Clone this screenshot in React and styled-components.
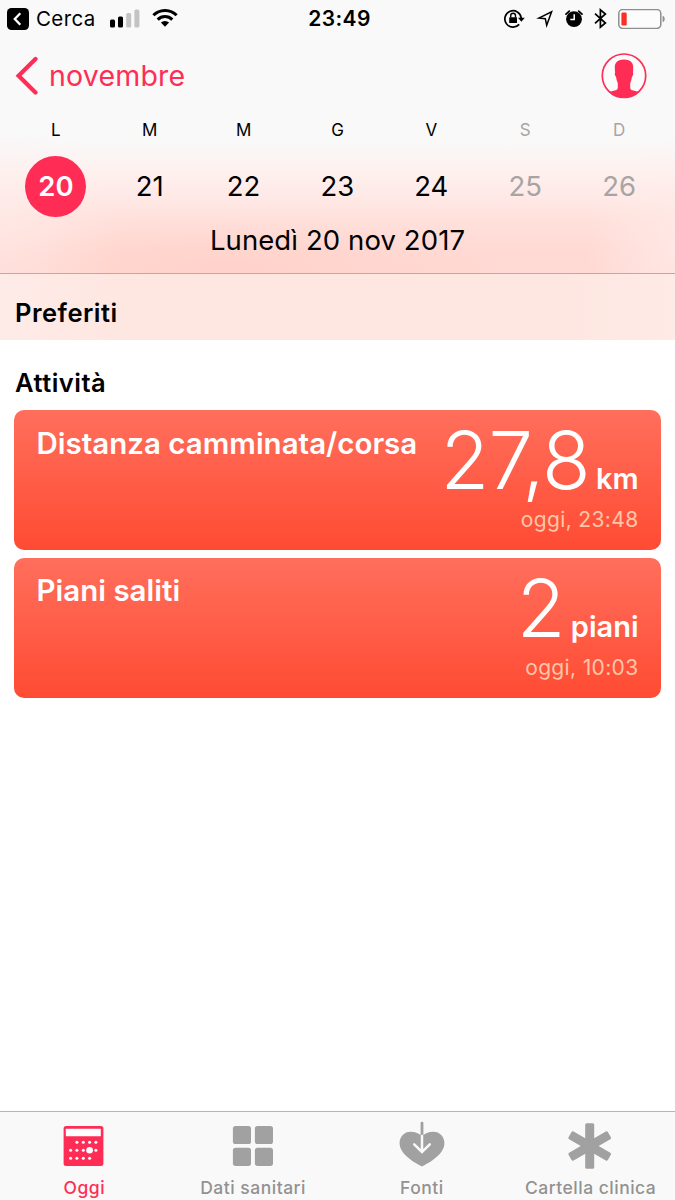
import styled, { createGlobalStyle } from "styled-components";

const colors = {
  pink: "#ff2d55",
  bar: "#f9f9f9",
  gray: "#929292",
  iconGray: "#a1a1a1",
  weekend: "#a9a4a4",
};

const days = [
  { letter: "L", number: "20", selected: true },
  { letter: "M", number: "21" },
  { letter: "M", number: "22" },
  { letter: "G", number: "23" },
  { letter: "V", number: "24" },
  { letter: "S", number: "25", weekend: true },
  { letter: "D", number: "26", weekend: true },
];

const activities = [
  { name: "Distanza camminata/corsa", value: "27,8", unit: "km", time: "oggi, 23:48" },
  { name: "Piani saliti", value: "2", unit: "piani", time: "oggi, 10:03" },
];

const tabs = [
  { label: "Oggi", Icon: TodayIcon, active: true },
  { label: "Dati sanitari", Icon: GridIcon },
  { label: "Fonti", Icon: SourcesIcon },
  { label: "Cartella clinica", Icon: RecordIcon },
];

const App = () => {
  return (
    <Screen>
      <GlobalStyle />
      <Header>
        <StatusBar />
        <NavBar>
          <BackButton>
            <ChevronIcon />
            <BackText>novembre</BackText>
          </BackButton>
          <ProfileIcon />
        </NavBar>
        <Week>
          {days.map((day) => (
            <Day key={day.number} $weekend={day.weekend}>
              <DayLetter>{day.letter}</DayLetter>
              <DayNumber $selected={day.selected}>{day.number}</DayNumber>
            </Day>
          ))}
        </Week>
        <FullDate>Lunedì 20 nov 2017</FullDate>
      </Header>
      <Favorites>
        <SectionTitle>Preferiti</SectionTitle>
      </Favorites>
      <Content>
        <SectionTitle>Attività</SectionTitle>
        <CardList>
          {activities.map((item) => (
            <Card key={item.name}>
              <CardName>{item.name}</CardName>
              <CardData>
                <Amount>
                  <Value>{item.value}</Value>
                  <Unit>{item.unit}</Unit>
                </Amount>
                <Time>{item.time}</Time>
              </CardData>
            </Card>
          ))}
        </CardList>
      </Content>
      <TabBar>
        {tabs.map(({ label, Icon, active }) => (
          <Tab key={label} $active={active}>
            <Icon />
            <TabLabel $active={active}>{label}</TabLabel>
          </Tab>
        ))}
      </TabBar>
    </Screen>
  );
};

export default App;

function StatusBar() {
  return (
    <Status>
      <StatusLeft>
        <svg width="22" height="22" viewBox="0 0 22 22">
          <rect width="22" height="22" rx="4.5" fill="#000" />
          <path d="M13.3 5.3 7.8 11l5.5 5.7" fill="none" stroke="#fff" strokeWidth="2.3" />
        </svg>
        <Carrier>Cerca</Carrier>
        <SignalIcon />
        <WifiIcon />
      </StatusLeft>
      <Clock>23:49</Clock>
      <StatusRight>
        <LockIcon />
        <LocationIcon />
        <AlarmIcon />
        <BluetoothIcon />
        <BatteryIcon />
      </StatusRight>
    </Status>
  );
}

function SignalIcon() {
  return (
    <svg width="30" height="20" viewBox="0 0 30 20">
      <rect x="0" y="10.5" width="5" height="8" rx="1.5" />
      <rect x="8" y="7.5" width="5" height="11" rx="1.5" />
      <rect x="16.2" y="4" width="5" height="14.5" rx="1.5" fill="#c3c3c3" />
      <rect x="24.4" y="0.5" width="5" height="18" rx="1.5" fill="#c3c3c3" />
    </svg>
  );
}

function WifiIcon() {
  return (
    <svg width="26" height="20" viewBox="0 0 26 20">
      <g fill="none" stroke="#000" strokeWidth="3">
        <path d="M1.4 6.3a16.4 16.4 0 0 1 23.2 0" />
        <path d="M5.7 10.6a10.3 10.3 0 0 1 14.6 0" />
      </g>
      <path d="M13 17.7 8.9 13.6a5.8 5.8 0 0 1 8.2 0Z" />
    </svg>
  );
}

function LockIcon() {
  return (
    <svg width="21" height="20" viewBox="0 0 21 20">
      <path d="M15.2 15.4a8.2 8.2 0 1 1 2-6.4" fill="none" stroke="#000" strokeWidth="1.7" />
      <path d="M14 8.7h6.8l-3.4 4Z" />
      <rect x="5.2" y="8.2" width="7.8" height="5.9" rx="0.6" />
      <path d="M6.7 8.5V6.7a2.4 2.4 0 0 1 4.8 0v1.8" fill="none" stroke="#000" strokeWidth="1.4" />
    </svg>
  );
}

function LocationIcon() {
  return (
    <svg width="18" height="20" viewBox="0 0 18 20">
      <path d="M2.8 9.1 15.6 2.800 10.7 16.2 9.3 9.7Z" fill="none" stroke="#000" strokeWidth="1.5" />
    </svg>
  );
}

function AlarmIcon() {
  return (
    <svg width="18" height="18" viewBox="0 0 18 18">
      <circle cx="9" cy="9.2" r="7.9" />
      <path d="M1 4.1 4.3 1.1M17 4.1l-3.3-3" stroke="#000" strokeWidth="1.8" strokeLinecap="round" />
      <path d="M9.2 4.3v5.3H5.3" fill="none" stroke="#fff" strokeWidth="1.5" />
    </svg>
  );
}

function BluetoothIcon() {
  return (
    <svg width="13" height="21" viewBox="0 0 13 21">
      <path
        d="M1 5.7 11.4 15 6.4 19.2V1.8l5 4.2L1 15.3"
        fill="none"
        stroke="#000"
        strokeWidth="1.7"
      />
    </svg>
  );
}

function BatteryIcon() {
  return (
    <svg width="48" height="20" viewBox="0 0 48 20">
      <rect x="0.8" y="0.6" width="42" height="18.8" rx="3.8" fill="#fcfcfc" stroke="#8e8e8e" strokeWidth="1.5" />
      <path d="M44.6 6.8c2.8.7 2.8 5.7 0 6.4Z" fill="#8e8e8e" />
      <rect x="3.4" y="3.4" width="5.3" height="13.2" rx="1.3" fill="#fb2f27" />
    </svg>
  );
}

function ChevronIcon() {
  return (
    <svg width="24" height="40" viewBox="0 0 24 40">
      <path
        d="M21.5 3 4.6 19.7l16.9 16.8"
        fill="none"
        stroke={colors.pink}
        strokeWidth="4.2"
        strokeLinecap="round"
      />
    </svg>
  );
}

function ProfileIcon() {
  return (
    <svg width="46" height="46" viewBox="0 0 46 46">
      <circle cx="23" cy="22.7" r="21.7" fill="#fbfbfb" stroke={colors.pink} strokeWidth="1.7" />
      <path
        d="M23 6.4c6 0 9.3 2.9 9.2 7.6 0 2-.1 3.8-.3 5.3.7 1.2.2 3.9-1 4.8-.3 2.5-.8 4.4-1.7 6v4.3c0 1.6.6 2.3 2.3 2.9 2.4.8 4.8 1.1 6.5 1.8C34 42.7 28.8 44.6 23 44.6S12 42.7 8 39.1c1.7-.7 4.1-1 6.5-1.8 1.7-.6 2.3-1.3 2.3-2.9v-4.3c-.9-1.6-1.4-3.5-1.7-6-1.2-.9-1.7-3.6-1-4.8-.2-1.5-.3-3.3-.3-5.3C13.7 9.3 17 6.4 23 6.4Z"
        fill={colors.pink}
      />
    </svg>
  );
}

function TodayIcon() {
  const dots = [
    [16.9, 21.3], [23.3, 21.3], [29.6, 21.3], [35.9, 21.3],
    [10.6, 29.3], [16.9, 29.3], [23.3, 29.3], [35.9, 29.3],
    [10.6, 37.3], [16.9, 37.3], [23.3, 37.3], [29.6, 37.3],
  ];
  return (
    <svg width="48" height="48" viewBox="0 0 48 48">
      <rect x="3.6" y="5" width="39.8" height="40" rx="2.5" fill="currentColor" />
      <rect x="5.8" y="7.7" width="35" height="7.6" rx="0.6" fill="#fff" />
      {dots.map(([x, y]) => (
        <circle key={`${x}-${y}`} cx={x} cy={y} r="1.5" fill="#fff" />
      ))}
      <circle cx="29.6" cy="29.3" r="3.3" fill="#fff" />
    </svg>
  );
}

function GridIcon() {
  return (
    <svg width="48" height="48" viewBox="0 0 48 48" fill="currentColor">
      <rect x="3.9" y="5" width="18.1" height="18.1" rx="2.6" />
      <rect x="25.9" y="5" width="18.1" height="18.1" rx="2.6" />
      <rect x="3.9" y="26.8" width="18.1" height="18.1" rx="2.6" />
      <rect x="25.9" y="26.8" width="18.1" height="18.1" rx="2.6" />
    </svg>
  );
}

function SourcesIcon() {
  return (
    <svg width="48" height="48" viewBox="0 0 48 48">
      <path
        d="M24 45.5C17.5 42 1.6 33.6 1.6 22.2 1.6 15.6 6.3 10.7 12.6 10.7c4.8 0 9 1.9 11.4 4.4 2.4-2.5 6.6-4.4 11.4-4.4 6.3 0 11 4.9 11 11.5C46.4 33.6 30.5 42 24 45.5Z"
        fill="currentColor"
      />
      <path d="M24 2.2V14" stroke="currentColor" strokeWidth="2.8" strokeLinecap="round" />
      <path d="M24 15V30M16.2 23.3 24 30.9l7.8-7.6" fill="none" stroke={colors.bar} strokeWidth="2.5" strokeLinecap="round" />
    </svg>
  );
}

function RecordIcon() {
  return (
    <svg width="48" height="48" viewBox="0 0 48 48" fill="currentColor">
      {[0, 60, 120].map((angle) => (
        <rect
          key={angle}
          x="18.2"
          y="2.3"
          width="9"
          height="45.4"
          rx="1.5"
          transform={`rotate(${angle} 22.7 25)`}
        />
      ))}
    </svg>
  );
}

const GlobalStyle = createGlobalStyle`
  * {
    box-sizing: border-box;
  }

  body {
    margin: 0;
    background-color: #fff;
    color: #000;
    font-family: Inter, "Liberation Sans", sans-serif;
  }

  svg {
    display: block;
    flex-shrink: 0;
  }
`;

const Screen = styled.div`
  display: flex;
  flex-direction: column;
  width: 675px;
  height: 1200px;
  overflow: hidden;
`;

const Header = styled.header`
  height: 274px;
  border-bottom: 1px solid #bfa9a7;
  background:
    radial-gradient(ellipse 120px 110px at 0 225px, rgba(255, 240, 238, 0.5), rgba(255, 240, 238, 0)),
    radial-gradient(ellipse 90px 110px at 675px 250px, rgba(255, 240, 238, 0.6), rgba(255, 240, 238, 0)),
    radial-gradient(ellipse 260px 50px at 230px 268px, rgba(255, 204, 194, 0.5), rgba(255, 204, 194, 0)),
    linear-gradient(to bottom, ${colors.bar} 138px, #fbf5f4 156px, #fef0ee 174px, #fee8e5 200px, #ffe0db 220px, #ffdad4 250px, #ffd9d3 273px);
`;

const Status = styled.div`
  display: grid;
  grid-template-columns: 1fr auto 1fr;
  align-items: center;
  height: 37px;
  padding: 0 9px 0 7px;
`;

const StatusLeft = styled.div`
  display: flex;
  align-items: center;

  svg:last-child {
    margin-left: 12px;
  }
`;

const StatusRight = styled.div`
  display: flex;
  align-items: center;
  justify-content: flex-end;
  gap: 11px;
`;

const Carrier = styled.span`
  width: 73px;
  padding-left: 7px;
  margin-right: 8px;
  font-size: 20.5px;
  letter-spacing: 0.4px;
`;

const Clock = styled.span`
  padding-left: 6px;
  font-size: 21px;
  font-weight: 600;
  letter-spacing: 0.4px;
`;

const NavBar = styled.div`
  display: flex;
  align-items: center;
  justify-content: space-between;
  height: 78px;
  padding: 0 28px 0 14px;
`;

const BackButton = styled.div`
  display: flex;
  align-items: center;
  gap: 11px;
  color: ${colors.pink};
`;

const BackText = styled.span`
  font-size: 28.5px;
  line-height: 40px;
  letter-spacing: 0.2px;
`;

const Week = styled.div`
  display: grid;
  grid-template-columns: repeat(7, 1fr);
  padding: 0 9px;
`;

const Day = styled.div`
  display: flex;
  flex-direction: column;
  align-items: center;
  color: ${({ $weekend }) => ($weekend ? colors.weekend : "#000")};
`;

const DayLetter = styled.span`
  font-size: 17px;
  line-height: 30px;
`;

const DayNumber = styled.span`
  width: 61px;
  height: 61px;
  margin-top: 10.5px;
  border-radius: 50%;
  background-color: ${({ $selected }) => ($selected ? colors.pink : "transparent")};
  color: ${({ $selected }) => ($selected ? "#fff" : "inherit")};
  font-size: 27.5px;
  font-weight: ${({ $selected }) => ($selected ? 580 : 400)};
  line-height: 61px;
  text-align: center;
`;

const FullDate = styled.div`
  font-size: 27.5px;
  line-height: 47px;
  letter-spacing: 0.1px;
  text-align: center;
`;

const Favorites = styled.section`
  height: 66px;
  padding: 19px 15px 0;
  background: linear-gradient(to right, #feebe8, #fee7e1 120px, #fee7e1 560px, #feeae6);
`;

const Content = styled.main`
  flex: 1;
  padding: 23px 14px 0 14px;
`;

const SectionTitle = styled.h2`
  margin: 0;
  font-size: 25.5px;
  font-weight: 600;
  line-height: 40px;
  letter-spacing: 0.5px;

  ${Content} & {
    padding-left: 1px;
  }
`;

const CardList = styled.div`
  display: flex;
  flex-direction: column;
  gap: 7.5px;
  padding-top: 7px;
`;

const Card = styled.article`
  display: flex;
  justify-content: space-between;
  height: 140px;
  padding: 0 22.5px;
  border-radius: 10px;
  background: linear-gradient(to bottom, #ff6f5c, #ff4b33);
  color: #fff;
`;

const CardName = styled.h3`
  margin: 12.5px 0 0;
  font-size: 29.5px;
  font-weight: 560;
  line-height: 40px;
  white-space: nowrap;
`;

const CardData = styled.div`
  display: flex;
  flex-direction: column;
  align-items: flex-end;
`;

const Amount = styled.div`
  display: flex;
  align-items: baseline;
  gap: 6px;
  height: 99px;
`;

const Value = styled.span`
  font-size: 79.5px;
  font-weight: 280;
  line-height: 100px;
  letter-spacing: -0.8px;
`;

const Unit = styled.span`
  font-size: 29px;
  font-weight: 600;
`;

const Time = styled.span`
  font-size: 21px;
  line-height: 22px;
  letter-spacing: 0.35px;
  color: #ffc6a8;
`;

const TabBar = styled.nav`
  display: grid;
  grid-template-columns: repeat(4, 1fr);
  height: 89px;
  border-top: 1px solid #b4b6b6;
  background-color: ${colors.bar};
`;

const Tab = styled.div`
  display: flex;
  flex-direction: column;
  align-items: center;
  padding-top: 9px;
  color: ${({ $active }) => ($active ? colors.pink : colors.iconGray)};
`;

const TabLabel = styled.span`
  margin-top: 3px;
  color: ${({ $active }) => ($active ? colors.pink : colors.gray)};
  font-size: 17.5px;
  font-weight: 460;
  line-height: 31px;
  letter-spacing: 0.5px;
  white-space: nowrap;
`;
